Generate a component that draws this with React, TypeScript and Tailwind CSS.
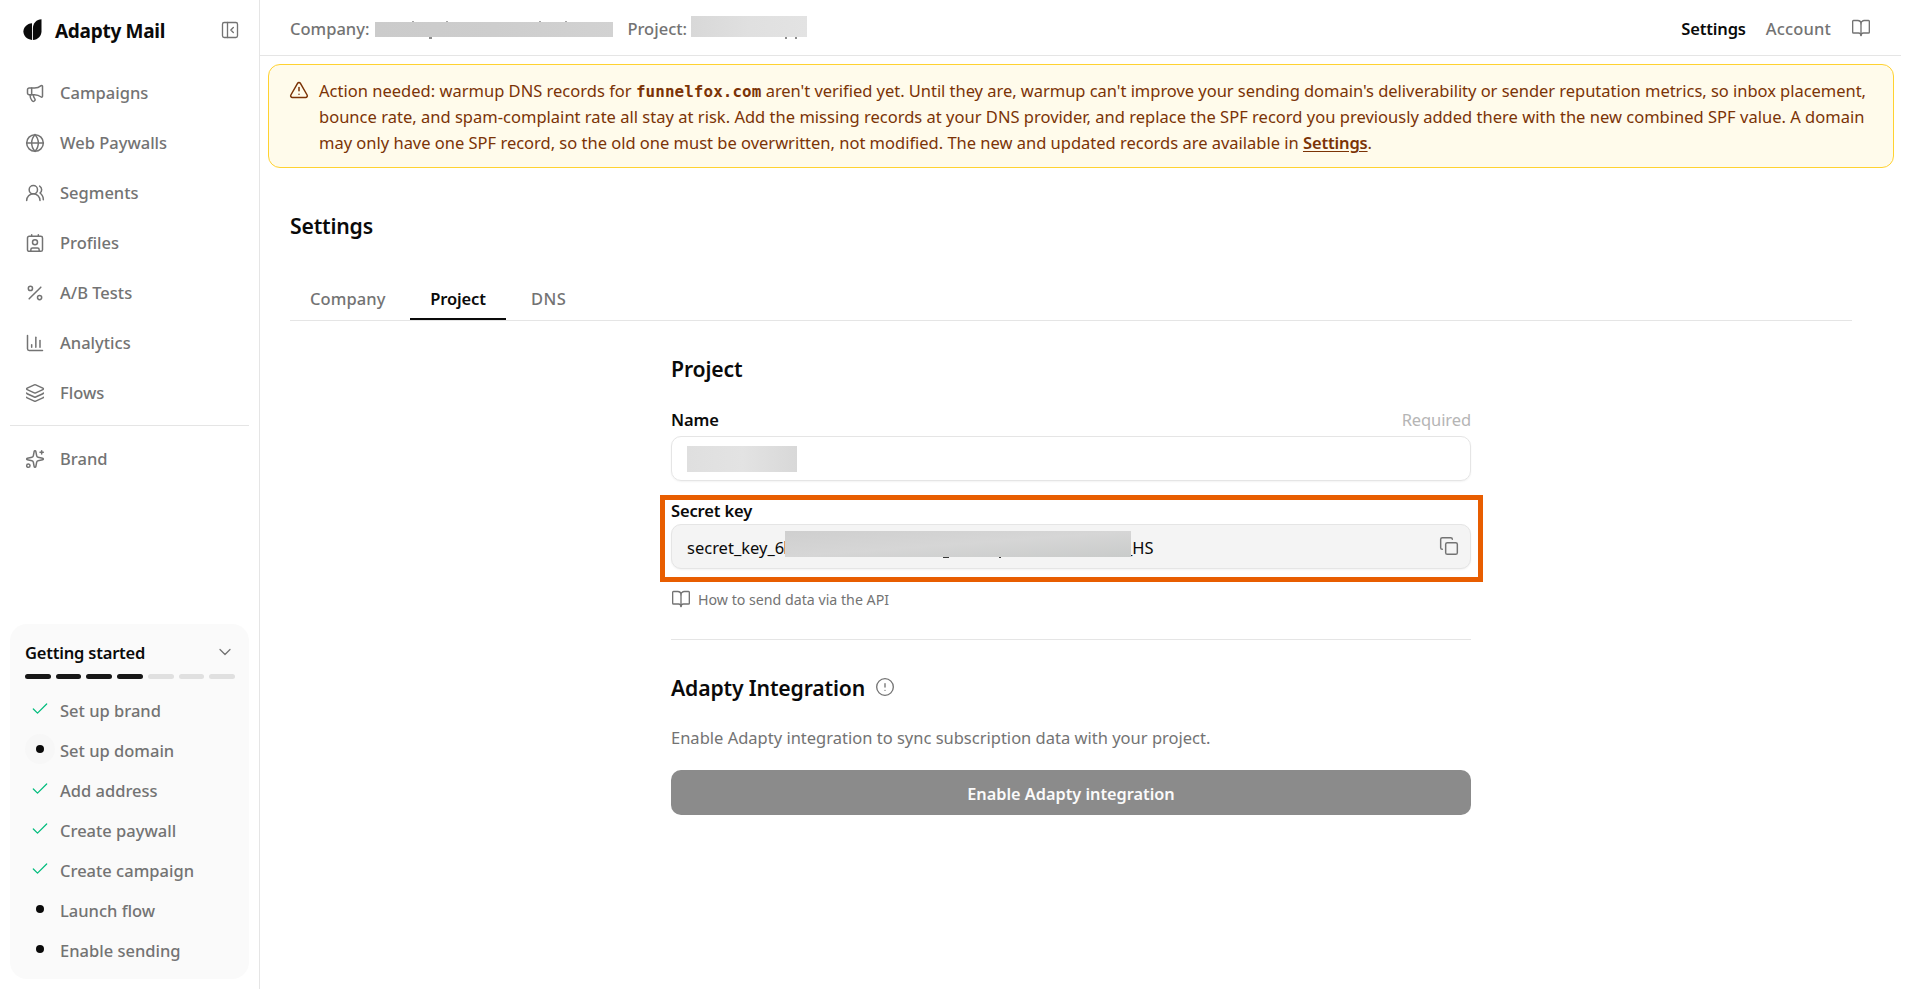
import React from "react";
import {
  BookOpen,
  ChartColumn,
  Check,
  ChevronDown,
  CircleAlert,
  Contact,
  Copy,
  Globe,
  Layers,
  Megaphone,
  PanelLeftClose,
  Percent,
  Sparkles,
  TriangleAlert,
  UsersRound,
  type LucideIcon,
} from "lucide-react";

const NAV: { label: string; icon: LucideIcon }[] = [
  { label: "Campaigns", icon: Megaphone },
  { label: "Web Paywalls", icon: Globe },
  { label: "Segments", icon: UsersRound },
  { label: "Profiles", icon: Contact },
  { label: "A/B Tests", icon: Percent },
  { label: "Analytics", icon: ChartColumn },
  { label: "Flows", icon: Layers },
];

const STEPS = [
  { label: "Set up brand", done: true },
  { label: "Set up domain", done: false, current: true },
  { label: "Add address", done: true },
  { label: "Create paywall", done: true },
  { label: "Create campaign", done: true },
  { label: "Launch flow", done: false },
  { label: "Enable sending", done: false },
];

function Logo() {
  return (
    <svg width="19" height="22" viewBox="0 0 19 22" fill="#0a0a0a">
      <path d="M9 4.2C4 4.6.4 8.2.4 12.6.4 17 4 20.6 9 21z" />
      <path d="M9.9 21V9.5C9.9 4 13.5.5 18.5.2V12.3C18.5 17 15 20.7 9.9 21z" />
    </svg>
  );
}

function NavItem({ label, icon: Icon }: { label: string; icon: LucideIcon }) {
  return (
    <div className="flex h-[50px] items-center gap-[15px] pl-[25px]">
      <Icon className="-mt-0.5 shrink-0" size={20} strokeWidth={1.8} />
      <span className="-mt-0.5 leading-[26px]">{label}</span>
    </div>
  );
}

function Sidebar() {
  return (
    <aside className="flex w-[260px] shrink-0 flex-col border-r border-[#e5e5e5] font-medium text-[#737373]">
      <div className="flex h-[69px] items-start pr-[19px] pl-[23px] pt-[18px]">
        <div className="mt-px">
          <Logo />
        </div>
        <span className="ml-[13px] grow text-[19px] leading-[26px] font-bold tracking-[-0.28px] text-[#0a0a0a]">
          Adapty Mail
        </span>
        <PanelLeftClose className="mt-0.5" size={20} strokeWidth={1.6} />
      </div>
      <nav>
        {NAV.map((n) => (
          <NavItem key={n.label} {...n} />
        ))}
        <div className="mx-2.5 mt-1.5 mb-[9px] h-px bg-[#e5e5e5]" />
        <NavItem label="Brand" icon={Sparkles} />
      </nav>
      <section className="mx-2.5 mt-auto mb-2.5 h-[355px] rounded-[17px] bg-[#fafafa]">
        <div className="flex items-center justify-between pt-4 pr-[14px] pl-[15px]">
          <h2 className="leading-[26px] font-semibold tracking-[-0.2px] text-[#0a0a0a]">Getting started</h2>
          <ChevronDown className="-mt-0.5" size={20} strokeWidth={1.5} />
        </div>
        <div className="mt-2 mr-[14px] ml-[15px] flex gap-[5px]">
          {STEPS.map((s, i) => (
            <div
              key={s.label}
              className={i < 4 ? "h-[5px] flex-1 rounded-full bg-[#171717]" : "h-[5px] flex-1 rounded-full bg-[#e0e0e0]"}
            />
          ))}
        </div>
        <ul className="mt-[11px]">
          {STEPS.map((s) => (
            <li key={s.label} className="flex h-10 items-center pl-[15px]">
              <span
                className={
                  s.current
                    ? "-mt-[3px] mr-[5px] flex size-[30px] items-center justify-center rounded-full bg-[#f7f7f7]"
                    : "-mt-[3px] mr-[5px] flex size-[30px] items-center justify-center"
                }
              >
                {s.done ? (
                  <Check size={20} strokeWidth={1.5} color="#00bc7d" />
                ) : (
                  <span className="size-2 rounded-full bg-[#0a0a0a]" />
                )}
              </span>
              <span className="pt-px leading-[26px]">{s.label}</span>
            </li>
          ))}
        </ul>
      </section>
    </aside>
  );
}

function Header() {
  return (
    <header className="flex h-14 items-center border-b border-[#e5e5e5] pt-0.5 pr-[30px] pl-[30px] leading-[26px] font-medium text-[#737373]">
      <span>Company:</span>
      <span className="relative mt-0.5 ml-1.5 h-[15px] w-[238px] bg-linear-to-r from-[#cbcbcb] via-[#cdcdcd] to-[#d2d2d2]">
        <span className="absolute top-[15px] left-[54px] h-[2px] w-[3px] bg-[#8d8d8d]" />
        <span className="absolute -top-px left-[37px] h-px w-[2px] bg-[#a5a5a5]" />
        <span className="absolute -top-px left-[71px] h-px w-[2px] bg-[#a5a5a5]" />
        <span className="absolute -top-px left-[164px] h-px w-[2px] bg-[#a5a5a5]" />
        <span className="absolute -top-px left-[190px] h-px w-[2px] bg-[#a5a5a5]" />
      </span>
      <span className="ml-[14px]">Project:</span>
      <span className="relative -mt-1 ml-1 h-[21px] w-[116px] bg-linear-to-r from-[#d8d8d8] via-[#e0e0e0] to-[#e3e3e3]">
        <span className="absolute top-[21px] left-[94px] h-[2px] w-[2px] bg-[#8d8d8d]" />
        <span className="absolute top-[21px] left-[104px] h-[2px] w-[2px] bg-[#8d8d8d]" />
      </span>
      <span className="ml-auto font-semibold tracking-[-0.15px] text-[#0a0a0a]">Settings</span>
      <span className="ml-5 tracking-[0.15px]">Account</span>
      <BookOpen className="-mt-0.5 ml-5" size={20} strokeWidth={1.6} />
    </header>
  );
}

function Banner() {
  return (
    <div className="mt-2 mr-[7px] ml-2 flex h-[104px] rounded-xl border border-[#ffd230] bg-[#fffbeb] pt-[12.8px] pl-5 text-[#7b3306]">
      <TriangleAlert className="mt-[2.2px] shrink-0" size={20} strokeWidth={1.8} />
      <p className="ml-2.5 text-[16.5px] leading-[26.2px] whitespace-nowrap">
        <span className="tracking-[-0.035px]">
          <span className="tracking-[0.01px]">Action needed: warmup DNS records for </span>
          <code className="font-['DejaVu_Sans_Mono',monospace] text-[15.9px] leading-none font-bold tracking-[0.08px]">
            funnelfox.com
          </code>{" "}
          aren't verified yet. Until they are, warmup can't improve your sending domain's deliverability or sender
          reputation metrics, so inbox placement,
        </span>
        <br />
        <span className="tracking-[0.015px]">
          bounce rate, and spam-complaint rate all stay at risk. Add the missing records at your DNS provider, and
          replace the SPF record you previously added there with the new combined SPF value. A domain
        </span>
        <br />
        <span className="tracking-[-0.01px]">
          may only have one SPF record, so the old one must be overwritten, not modified. The new and updated records
          are available in{" "}
          <a className="font-semibold tracking-[-0.15px] underline underline-offset-2">Settings</a>.
        </span>
      </p>
    </div>
  );
}

function Tabs() {
  return (
    <div className="mt-[45px] flex gap-1 border-b border-[#e5e5e5] leading-[26px] font-medium text-[#737373]">
      <span className="w-[116px] border-b-2 border-transparent px-5 pb-1.5 tracking-[0.1px]">Company</span>
      <span className="w-24 border-b-2 border-[#0a0a0a] pb-1.5 text-center font-semibold tracking-[-0.15px] text-[#0a0a0a]">
        Project
      </span>
      <span className="border-b-2 border-transparent px-[21px] pb-1.5 tracking-[0.4px]">DNS</span>
    </div>
  );
}

function ProjectForm() {
  return (
    <div className="mx-auto w-[800px]">
      <h2 className="mt-[33px] text-[21.2px] leading-[30px] font-semibold tracking-[-0.15px]">Project</h2>

      <div className="mt-[23px] flex justify-between leading-[26px]">
        <label className="font-semibold tracking-[-0.1px]">Name</label>
        <span className="tracking-[-0.1px] text-[#b5b5b5]">Required</span>
      </div>
      <div className="mt-[3px] flex h-[45px] items-center rounded-[10px] border border-[#e5e5e5] pl-[15px] shadow-xs">
        <span className="h-[26px] w-[110px] bg-linear-to-r from-[#dfdfdf] via-[#e3e3e3] to-[#d8d8d8]" />
      </div>

      <div className="relative mt-[18px]">
        <label className="block leading-6 font-semibold tracking-[-0.15px]">Secret key</label>
        <div className="mt-px flex h-[45px] items-center rounded-[10px] border border-[#e5e5e5] bg-[#f4f4f4] pr-[11px] pl-[15px] shadow-xs">
          <span className="w-[98px] pt-0.5 leading-[26px] whitespace-nowrap">secret_key_6</span>
          <span className="relative z-10 -mt-[5px] h-[26px] w-[346px] bg-linear-to-br from-[#cfcfcf] via-[#d6d6d6] to-[#c9cbca]">
            <span className="absolute top-[10px] -left-px h-[13px] w-px bg-[#e09a60]" />
            <span className="absolute top-[26px] left-[158px] h-px w-1.5 bg-[#3a3a3a]" />
            <span className="absolute top-[26px] left-[214px] h-px w-0.5 bg-[#3a3a3a]" />
          </span>
          <span className="-ml-[6px] grow pt-0.5 leading-[26px]">_HS</span>
          <Copy className="-mt-0.5" size={20} strokeWidth={1.75} color="#737373" />
        </div>
        <div className="pointer-events-none absolute -top-1 -left-[11px] h-[87px] w-[823px] border-5 border-[#e85d00]" />
      </div>

      <div className="mt-5 flex h-5 items-center gap-[7px] text-[14.2px] text-[#737373]">
        <BookOpen size={20} strokeWidth={1.6} />
        <span className="pt-px leading-5">How to send data via the API</span>
      </div>

      <div className="mt-[30px] h-px bg-[#e5e5e5]" />

      <div className="mt-[33px] flex items-center">
        <h2 className="w-[204px] text-[21.2px] leading-[30px] font-semibold tracking-[-0.15px]">Adapty Integration</h2>
        <CircleAlert className="-mt-0.5" size={20} strokeWidth={1.6} color="#737373" />
      </div>
      <p className="mt-[22px] leading-[26px] text-[#737373]">
        Enable Adapty integration to sync subscription data with your project.
      </p>
      <button className="mt-[19px] flex h-[45px] w-full items-center justify-center rounded-[10px] bg-[#8b8b8b] pt-[3px] text-[16.3px] font-semibold text-[#fafafa]">
        Enable Adapty integration
      </button>
    </div>
  );
}

export default function App() {
  return (
    <div className="flex h-[989px] overflow-hidden bg-white font-['Noto_Sans','Open_Sans',sans-serif] text-[16.5px] text-[#0a0a0a]">
      <Sidebar />
      <div className="mr-[19px] flex grow flex-col">
        <Header />
        <Banner />
        <main className="mr-[49px] ml-[30px]">
          <h1 className="mt-[43px] text-[21.2px] leading-[30px] font-semibold tracking-[-0.2px]">Settings</h1>
          <Tabs />
          <ProjectForm />
        </main>
      </div>
    </div>
  );
}
